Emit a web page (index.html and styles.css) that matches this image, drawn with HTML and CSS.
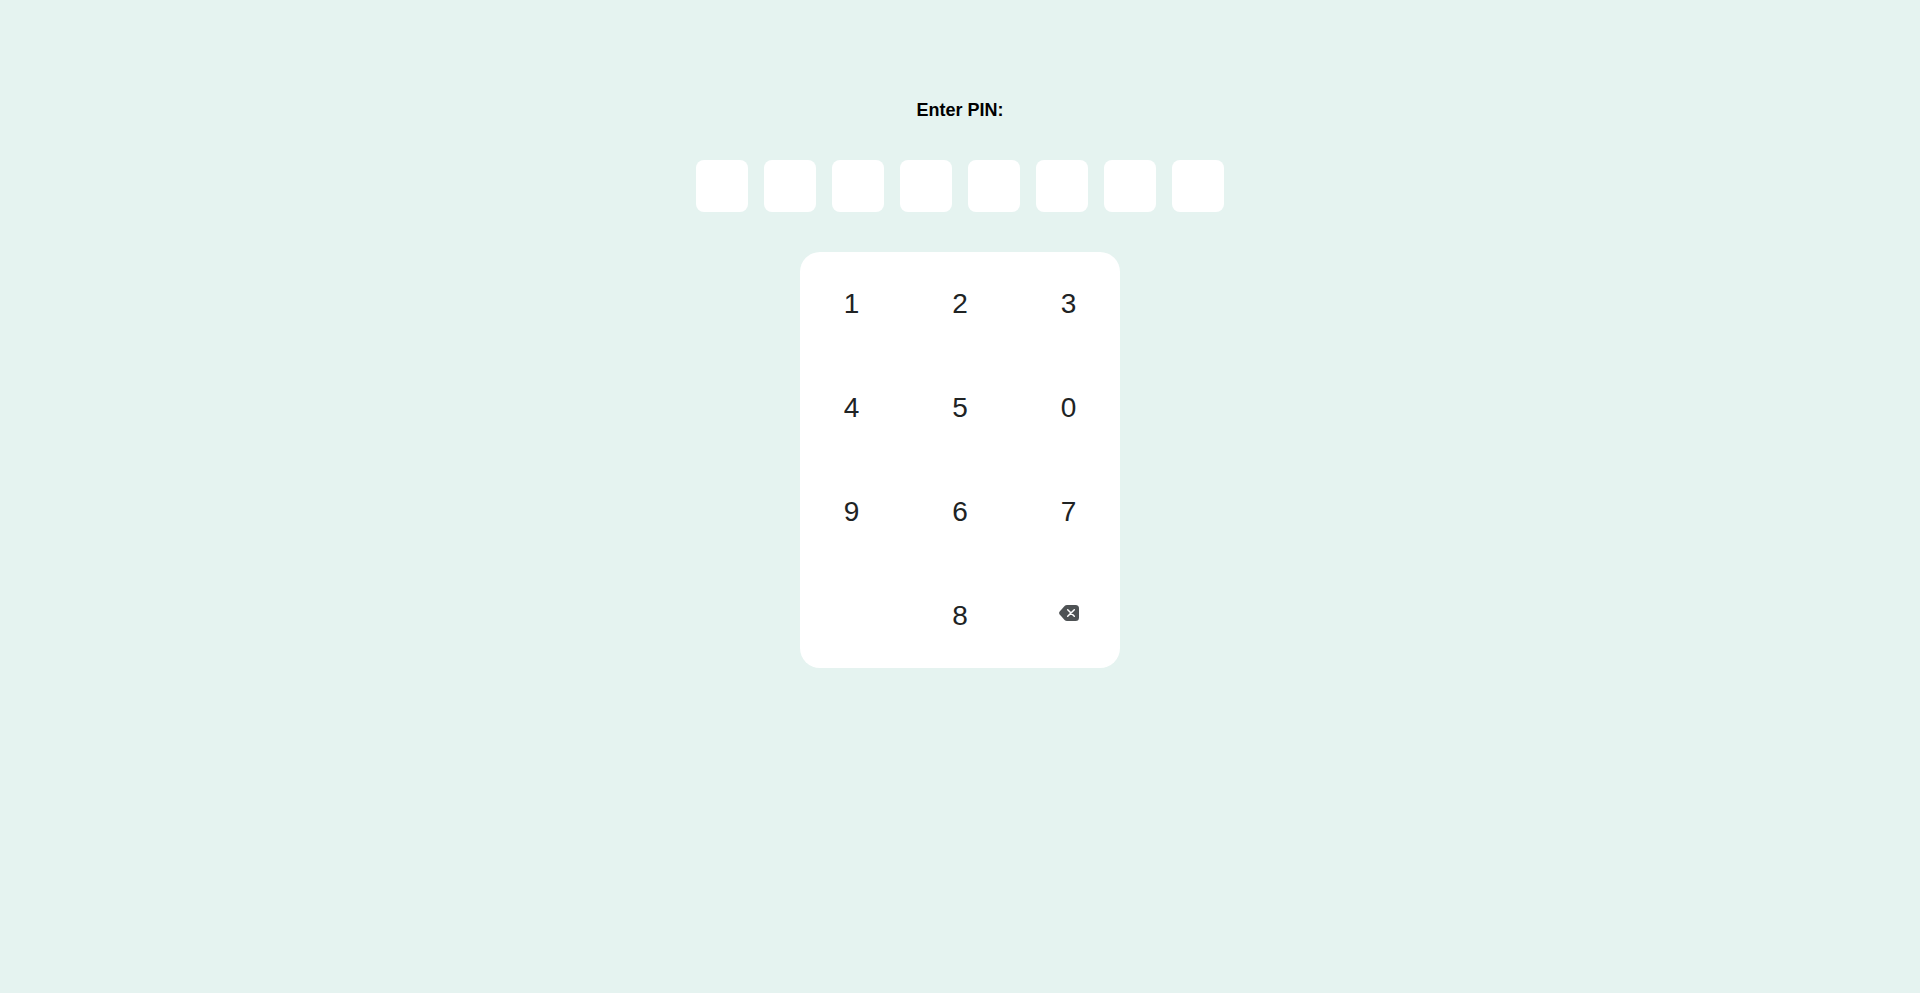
FILE: index.html
```html
<!DOCTYPE html>
<html lang="en">
<head>
<meta charset="utf-8">
<title>Enter PIN</title>
<link rel="stylesheet" href="styles.css">
</head>
<body>
<main class="pin">
  <h1 class="pin-title" id="pin-title">Enter PIN:</h1>
  <div class="pin-fields" role="group" aria-labelledby="pin-title">
    <input class="pin-field" type="password" maxlength="1" aria-label="Digit 1" readonly>
    <input class="pin-field" type="password" maxlength="1" aria-label="Digit 2" readonly>
    <input class="pin-field" type="password" maxlength="1" aria-label="Digit 3" readonly>
    <input class="pin-field" type="password" maxlength="1" aria-label="Digit 4" readonly>
    <input class="pin-field" type="password" maxlength="1" aria-label="Digit 5" readonly>
    <input class="pin-field" type="password" maxlength="1" aria-label="Digit 6" readonly>
    <input class="pin-field" type="password" maxlength="1" aria-label="Digit 7" readonly>
    <input class="pin-field" type="password" maxlength="1" aria-label="Digit 8" readonly>
  </div>
  <div class="keypad">
    <button class="key" type="button">1</button>
    <button class="key" type="button">2</button>
    <button class="key" type="button">3</button>
    <button class="key" type="button">4</button>
    <button class="key" type="button">5</button>
    <button class="key" type="button">0</button>
    <button class="key" type="button">9</button>
    <button class="key" type="button">6</button>
    <button class="key" type="button">7</button>
    <span class="key-blank"></span>
    <button class="key" type="button">8</button>
    <button class="key key-delete" type="button" aria-label="Delete">
      <svg class="delete-icon" viewBox="0 0 20 16" aria-hidden="true">
        <path d="M8 0H16.500Q20 0 20 3.500V12.500Q20 16 16.500 16H8Q6.600 16 5.600 15L.7 9.600Q-.5 8 .7 6.400L5.600 1Q6.600 0 8 0Z" fill="#4e5254"/>
        <path d="M8.700 4.700L15.300 11.300M15.300 4.700L8.700 11.300" stroke="#fff" stroke-width="1.500" stroke-linecap="round" fill="none"/>
      </svg>
    </button>
  </div>
</main>
</body>
</html>
```
FILE: styles.css
```css
body {
  margin: 0;
  background: #e5f3f0;
  font-family: "Liberation Sans", Arial, sans-serif;
}

.pin {
  display: flex;
  flex-direction: column;
  align-items: center;
  gap: 40px;
  padding: 100px 16px 40px;
}

.pin-title {
  margin: 0;
  font-size: 18px;
  line-height: 20px;
  color: #000;
}

.pin-fields {
  display: flex;
  flex-wrap: wrap;
  justify-content: center;
  gap: 16px;
}

.pin-field {
  box-sizing: border-box;
  width: 52px;
  height: 52px;
  padding: 0;
  border: 0;
  border-radius: 8px;
  background: #fff;
  font-size: 28px;
  text-align: center;
}

.keypad {
  display: grid;
  grid-template-columns: repeat(3, 103px);
  grid-auto-rows: 104px;
  justify-content: space-between;
  width: 320px;
  border-radius: 20px;
  background: #fff;
}

.key {
  display: flex;
  align-items: center;
  justify-content: center;
  padding: 0;
  border: 0;
  border-radius: 20px;
  background: transparent;
  font-family: inherit;
  font-size: 28px;
  line-height: 32px;
  color: #202324;
  cursor: pointer;
}

.key-delete {
  padding-bottom: 6px;
}

.delete-icon {
  width: 20px;
  height: 16px;
}
```
